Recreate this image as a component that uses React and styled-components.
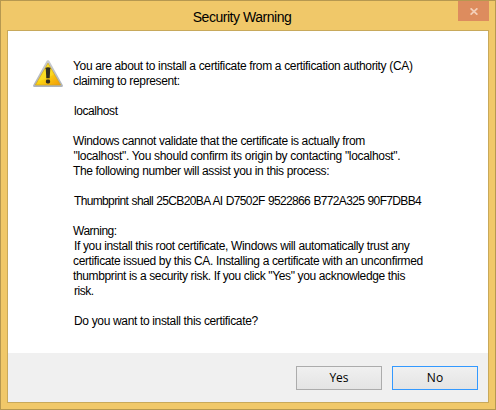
import React from "react";
import styled, { createGlobalStyle } from "styled-components";

const GlobalStyle = createGlobalStyle`
  *, *::before, *::after { box-sizing: border-box; }
  body { margin: 0; background: #f0c869; }
`;

const Window = styled.div`
  display: flex;
  flex-direction: column;
  width: 496px;
  height: 410px;
  padding: 0 6px 6px;
  border: 1px solid #b69850;
  background: #f0c869;
  color: #000;
  font-family: "Liberation Sans", Arial, sans-serif;
`;

const TitleBar = styled.header`
  display: grid;
  grid-template-columns: 31px 1fr 31px;
  flex: 0 0 29px;
`;

const Title = styled.h1`
  grid-column: 2;
  margin: 0;
  padding: 8px 12px 0 0;
  font-size: 14px;
  font-weight: 400;
  line-height: 16px;
  letter-spacing: -0.47px;
  text-align: center;
`;

const CloseButton = styled.button`
  display: flex;
  align-items: center;
  justify-content: center;
  width: 31px;
  height: 20px;
  padding: 1px 0 0 1px;
  border: 0;
  background: #dd8c5e;
`;

const Client = styled.main`
  display: flex;
  flex: 1;
  flex-direction: column;
  border: 1px solid #c8a95b;
  background: #fff;
`;

const Content = styled.section`
  display: flex;
  flex: 1;
  gap: 8px;
  padding: 28px 0 0 24px;
`;

const IconSlot = styled.div`
  flex: 0 0 33px;
`;

const Message = styled.div`
  font-size: 12px;
  line-height: 15px;
`;

const Paragraph = styled.p`
  margin: 0 0 ${(p) => (p.$tight ? 0 : 15)}px;
`;

const Line = styled.span`
  display: block;
  padding-left: ${(p) => p.$indent || 0}px;
  letter-spacing: ${(p) => p.$tracking}px;
  word-spacing: ${(p) => p.$wordGap || 0}px;
  white-space: nowrap;
`;

const Footer = styled.footer`
  display: flex;
  flex: 0 0 49px;
  justify-content: flex-end;
  gap: 10px;
  padding: 13px 10px 0 0;
  background: #f0f0f0;
`;

const Button = styled.button`
  width: 86px;
  height: 24px;
  padding: 0 0 1px;
  border: 1px solid ${(p) => (p.$focused ? "#3399ff" : "#acacac")};
  background: linear-gradient(#f0f0f0, #e4e4e4);
  color: #000;
  font: 12px/20px "Open Sans", "Segoe UI", sans-serif;
`;

const paragraphs = [
  [
    ["You are about to install a certificate from a certification authority (CA)", -0.345],
    ["claiming to represent:", -0.36],
  ],
  [["localhost", -0.42, 1]],
  [
    ["Windows cannot validate that the certificate is actually from", -0.365],
    ['"localhost". You should confirm its origin by contacting "localhost".', -0.315, 0.5],
    ["The following number will assist you in this process:", -0.35],
  ],
  [["Thumbprint shall 25CB20BA AI D7502F 9522866 B772A325 90F7DBB4", -0.645, 1, 0.6]],
  [
    ["Warning:", -0.5],
    ["If you install this root certificate, Windows will automatically trust any", -0.36, 1],
    ["certificate issued by this CA. Installing a certificate with an unconfirmed", -0.36],
    ['thumbprint is a security risk. If you click "Yes" you acknowledge this', -0.365],
    ["risk.", -0.5, 1],
  ],
  [["Do you want to install this certificate?", -0.34, 1]],
];

function WarningIcon() {
  return (
    <svg width="32" height="30" viewBox="0 0 32 30" aria-hidden="true">
      <defs>
        <linearGradient id="rim" x1="0" y1="0" x2="0" y2="1">
          <stop offset="0" stopColor="#c9ccd0" />
          <stop offset="1" stopColor="#aeb3bb" />
        </linearGradient>
        <linearGradient id="face" x1="0" y1="0" x2="1" y2="1">
          <stop offset="0.2" stopColor="#f5dc20" />
          <stop offset="0.5" stopColor="#fbd411" />
          <stop offset="1" stopColor="#f39a08" />
        </linearGradient>
      </defs>
      <path
        d="M16 1.2c.8 0 1.3.5 1.7 1.2l13 23.500c.6 1.100.1 2-1.100 2H2.400c-1.200 0-1.700-.9-1.100-2l13-23.500c.4-.7.900-1.200 1.700-1.200Z"
        fill="url(#rim)"
      />
      <path d="M16 4.200 28.600 26H3.400Z" fill="url(#face)" stroke="#d3a51b" strokeWidth="0.7" />
      <path d="M16 5 22 15.500Q15 20 5.800 22.500Z" fill="#fff04a" opacity="0.3" />
      <path d="M13.700 9.200q0-1 2.300-1t2.300 1l-.6 10h-3.400Z" fill="#302d20" />
      <rect x="13.900" y="20.600" width="4.200" height="3.800" rx="1.300" fill="#302d20" />
    </svg>
  );
}

function CloseIcon() {
  return (
    <svg width="8" height="7" viewBox="0 0 8 7" aria-hidden="true">
      <path d="M.6.3 7.400 6.700M7.400.3.6 6.700" stroke="#f3cfb9" strokeWidth="1.700" fill="none" />
    </svg>
  );
}

export default function App() {
  return (
    <>
      <GlobalStyle />
      <Window>
        <TitleBar>
          <Title>Security Warning</Title>
          <CloseButton aria-label="Close">
            <CloseIcon />
          </CloseButton>
        </TitleBar>
        <Client>
          <Content>
            <IconSlot>
              <WarningIcon />
            </IconSlot>
            <Message>
              {paragraphs.map((lines, i) => (
                <Paragraph key={i} $tight={i === paragraphs.length - 1}>
                  {lines.map(([text, tracking, indent, wordGap]) => (
                    <Line key={text} $tracking={tracking} $indent={indent} $wordGap={wordGap}>
                      {text}
                    </Line>
                  ))}
                </Paragraph>
              ))}
            </Message>
          </Content>
          <Footer>
            <Button>Yes</Button>
            <Button $focused>No</Button>
          </Footer>
        </Client>
      </Window>
    </>
  );
}
